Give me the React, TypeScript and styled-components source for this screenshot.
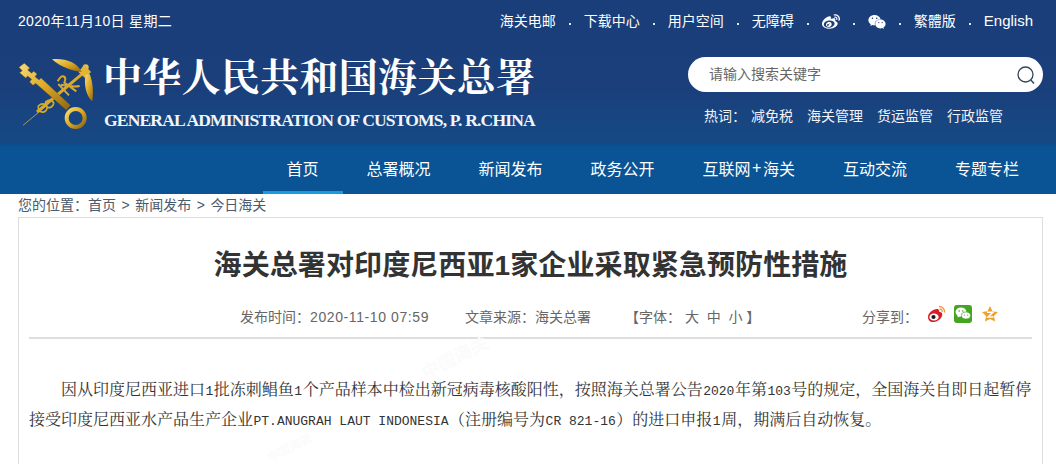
import React from "react";
import styled, { createGlobalStyle } from "styled-components";
import { FaWeibo, FaWeixin } from "react-icons/fa";

const sans = `"Liberation Sans", "Noto Sans CJK SC", sans-serif`;

const Global = createGlobalStyle`
  html, body { margin: 0; padding: 0; background: #fff; overflow: hidden; }
  body { font-family: ${sans}; }
  * { box-sizing: border-box; }
`;

const Page = styled.div`
  width: 1056px;
  height: 464px;
  overflow: hidden;
  background: #fff;
`;

const Header = styled.header`
  height: 144px;
  background: linear-gradient(180deg, #1a3e7a 0%, #1a3f7b 60%, #164a85 100%);
  color: #fff;
`;

const TopBar = styled.div`
  height: 40px;
  padding: 0 23px 0 18px;
  display: flex;
  align-items: center;
  justify-content: space-between;
  font-size: 14px;
`;

const DateText = styled.span`
  color: #fff;
  letter-spacing: 0.33px;
`;

const Links = styled.nav`
  display: flex;
  align-items: center;
`;

const TopLink = styled.a<{ $en?: boolean }>`
  color: #fff;
  display: inline-flex;
  align-items: center;
  font-size: ${(p) => (p.$en ? "15px" : "14px")};
`;

const TopIcon = styled(TopLink)`
  padding-top: 3px;
`;

const Dot = styled.i`
  width: 28px;
  display: flex;
  justify-content: center;
  &::before {
    content: "";
    width: 2px;
    height: 2px;
    margin-top: 8px;
    background: #dfe8f5;
  }
`;

const HeadRow = styled.div`
  height: 104px;
  padding: 0 13px 0 17px;
  display: flex;
  justify-content: space-between;
`;

const Brand = styled.div`
  display: flex;
  gap: 5px;
  padding-top: 12px;
`;

const Logo = styled.svg`
  width: 81px;
  height: 86px;
  flex: none;
`;

const BrandText = styled.div`
  display: flex;
  flex-direction: column;
`;

const TitleCn = styled.h1`
  margin: -3px 0 0;
  font-family: "Noto Serif CJK SC", "Noto Sans CJK SC", serif;
  font-size: 39px;
  line-height: 50px;
  letter-spacing: 0.3px;
  font-weight: 700;
  white-space: nowrap;
  color: #fff;
`;

const TitleEn = styled.div`
  font-family: "Liberation Serif", serif;
  font-size: 17.5px;
  line-height: 24px;
  margin: 9px 0 0 1px;
  font-weight: 700;
  letter-spacing: -0.82px;
  white-space: nowrap;
  color: #f2f5fa;
`;

const SearchCol = styled.div`
  width: 355px;
  padding-top: 17px;
  display: flex;
  flex-direction: column;
`;

const SearchBox = styled.div`
  height: 35px;
  background: #fff;
  border-radius: 18px;
  padding: 0 7px 0 21px;
  display: flex;
  align-items: center;
  justify-content: space-between;
  color: #666;
  font-size: 14px;
`;

const Placeholder = styled.span`
  margin-top: -3px;
`;

const SearchIcon = styled.svg`
  width: 20px;
  height: 20px;
`;

const HotRow = styled.div`
  margin-top: 14px;
  padding-left: 16px;
  display: flex;
  font-size: 14px;
  line-height: 20px;
  color: #f0f4fa;
`;

const HotLabel = styled.span`
  width: 47px;
`;

const HotWord = styled.a`
  margin-right: 14px;
`;

const MainNav = styled.nav`
  height: 50px;
  background: #0a5394;
  border-top: 2px solid #0f4c8c;
  display: flex;
  justify-content: flex-end;
  padding-right: 13px;
`;

const NavItem = styled.a<{ $active?: boolean }>`
  height: 48px;
  padding: 0 24px 2px;
  display: flex;
  align-items: center;
  color: #fff;
  font-size: 16px;
  border-bottom: 3px solid ${(p) => (p.$active ? "#1a9be0" : "transparent")};
`;

const NavPlus = styled.span`
  padding: 0 1.5px;
`;

const Crumbs = styled.div`
  height: 23px;
  padding: 0 0 2px 18px;
  display: flex;
  align-items: center;
  font-size: 14px;
  color: #4b5a6c;
  line-height: 20px;
`;

const CrumbSep = styled.span`
  margin: 0 5.5px;
`;

const Card = styled.main`
  position: relative;
  margin-left: 18px;
  width: 1025px;
  height: 260px;
  border: 1px solid #dcdcdc;
  border-bottom: 0;
  padding: 0 10px;
  overflow: hidden;
`;

const Title = styled.h2`
  margin: 0;
  padding-top: 28px;
  font-size: 28px;
  line-height: 40px;
  letter-spacing: 0.1px;
  font-weight: 700;
  color: #333;
  text-align: center;
`;

const Meta = styled.div`
  margin-top: 19px;
  height: 34px;
  padding-left: 211px;
  border-bottom: 2px solid #dedede;
  display: flex;
  align-items: flex-start;
  font-size: 14px;
  line-height: 24px;
  color: #666;
`;

const MetaItem = styled.span<{ $w: number }>`
  width: ${(p) => p.$w}px;
  flex: none;
  white-space: pre;
`;

const MetaDate = styled(MetaItem)`
  letter-spacing: 0.6px;
`;

const Share = styled.span`
  display: flex;
  align-items: center;
  height: 20px;
  margin-top: -1px;
`;

const ShareIcon = styled.svg<{ $gap?: number }>`
  width: 20px;
  height: 20px;
  margin-left: ${(p) => p.$gap ?? 8}px;
`;

const Article = styled.article`
  position: relative;
  z-index: 1;
  padding-top: 35px;
  width: 1003px;
  font-family: "Noto Serif CJK SC", "Noto Sans CJK SC", serif;
  font-size: 16px;
  line-height: 30px;
  font-weight: 400;
  color: #333;
`;

const Para = styled.p`
  margin: 0;
  text-indent: 32px;
`;

const Latin = styled.span`
  font-family: "Liberation Mono", monospace;
  font-size: 13px;
  line-height: 1;
  margin: 0 0.5px;
`;

const Watermark = styled.span<{ $left: number; $top: number; $size: number }>`
  position: absolute;
  left: ${(p) => p.$left}px;
  top: ${(p) => p.$top}px;
  transform: rotate(-27deg);
  font-size: ${(p) => p.$size}px;
  line-height: 1;
  font-weight: 700;
  color: #fbfbfb;
  white-space: nowrap;
  user-select: none;
`;

const Shield = () => (
  <Logo viewBox="20 30 243 258" aria-hidden="true">
    <defs>
      <linearGradient id="gold" x1="0" y1="0" x2="1" y2="1">
        <stop offset="0" stopColor="#f7dc7a" />
        <stop offset="0.5" stopColor="#dca823" />
        <stop offset="1" stopColor="#8f6510" />
      </linearGradient>
    </defs>
    <path d="M38 250 L110 190" stroke="#a59468" strokeWidth="3" fill="none" />
    <path d="M80 210 L220 92" stroke="#d9a92a" strokeWidth="9" fill="none" />
    <path
      d="M84 192 C98 178 116 190 108 204 C100 216 82 210 84 192 Z M106 180 C120 168 134 178 128 190 C120 202 104 198 106 180 Z"
      stroke="#d9a92a"
      strokeWidth="5"
      fill="none"
    />
    <path
      d="M142 118 C156 92 170 104 162 122 L198 148 M144 126 L176 160 M152 128 C170 132 190 136 208 132"
      stroke="#d9a92a"
      strokeWidth="6"
      fill="none"
    />
    <circle cx="226" cy="76" r="9" fill="#e8bf45" />
    <path d="M222 68 L242 90 L224 108 L204 90 Z" fill="#e3b534" />
    <path d="M125 52 C160 48 198 58 214 90 C190 88 150 76 125 52 Z" fill="url(#gold)" />
    <path d="M238 96 C248 122 250 150 246 178 C226 160 220 124 226 98 Z" fill="url(#gold)" />
    <path
      d="M42 64 L58 78 L52 84 L64 94 L70 88 L80 96 L74 104 L86 114 L92 108 L180 190 L168 204 L76 124 L68 130 L58 120 L64 112 L52 102 L46 108 L28 92 L36 86 L26 76 Z"
      fill="url(#gold)"
      stroke="#7d5a0e"
      strokeWidth="1"
    />
    <circle cx="196" cy="228" r="27" fill="none" stroke="url(#gold)" strokeWidth="12" />
  </Logo>
);

const Weibo = () => (
  <ShareIcon $gap={8} viewBox="0 0 20 20" aria-hidden="true">
    <path d="M2 13 C2 9 7 5 11 5 C13.500 5 13 7.500 13.500 8 C15.500 8 17 9.500 16 12 C14.500 16 10 18 7 18 C4 18 2 16 2 13 Z" fill="#d81e29" />
    <ellipse cx="8" cy="13" rx="4.600" ry="3.600" fill="#fff" />
    <circle cx="7.500" cy="13" r="2.100" fill="#1b1b1b" />
    <path d="M13 2.500 C16.500 2.500 19 5 18.500 8.500 M13.500 5 C15.200 5 16.500 6.300 16.200 8" stroke="#ef9a3c" strokeWidth="1.300" fill="none" />
  </ShareIcon>
);

const WeChat = () => (
  <ShareIcon $gap={7} viewBox="0 0 20 20" aria-hidden="true">
    <rect x="1" y="1" width="18" height="18" rx="3" fill="#45a420" />
    <ellipse cx="8" cy="8" rx="5.500" ry="4.500" fill="#fff" />
    <path d="M5 11 L4.500 13.500 L8 12 Z" fill="#fff" />
    <ellipse cx="13" cy="11.500" rx="4.500" ry="3.500" fill="#fff" stroke="#45a420" strokeWidth="0.700" />
    <circle cx="6.200" cy="7" r="0.800" fill="#45a420" />
    <circle cx="9.800" cy="7" r="0.800" fill="#45a420" />
    <circle cx="11.500" cy="11" r="0.600" fill="#45a420" />
    <circle cx="14.500" cy="11" r="0.600" fill="#45a420" />
  </ShareIcon>
);

const QZone = () => (
  <ShareIcon $gap={7} viewBox="0 0 20 20" aria-hidden="true">
    <path d="M10 2 L12.500 7.200 L18 8 L14 12 L15 17.500 L10 15 L5 17.500 L6 12 L2 8 L7.500 7.200 Z" fill="#eda02c" />
    <path d="M7 8.300 H13 L8 13 H13.500" stroke="#fff" strokeWidth="1.500" fill="none" />
  </ShareIcon>
);

export default function App() {
  return (
    <Page>
      <Global />
      <Header>
        <TopBar>
          <DateText>2020年11月10日 星期二</DateText>
          <Links>
            <TopLink>海关电邮</TopLink>
            <Dot />
            <TopLink>下载中心</TopLink>
            <Dot />
            <TopLink>用户空间</TopLink>
            <Dot />
            <TopLink>无障碍</TopLink>
            <Dot />
            <TopIcon><FaWeibo size={18} /></TopIcon>
            <Dot />
            <TopIcon><FaWeixin size={18} /></TopIcon>
            <Dot />
            <TopLink>繁體版</TopLink>
            <Dot />
            <TopLink $en>English</TopLink>
          </Links>
        </TopBar>
        <HeadRow>
          <Brand>
            <Shield />
            <BrandText>
              <TitleCn>中华人民共和国海关总署</TitleCn>
              <TitleEn>GENERAL ADMINISTRATION OF CUSTOMS, P. R.CHINA</TitleEn>
            </BrandText>
          </Brand>
          <SearchCol>
            <SearchBox>
              <Placeholder>请输入搜索关键字</Placeholder>
              <SearchIcon viewBox="0 0 20 20" aria-hidden="true">
                <circle cx="9.500" cy="9.500" r="7.500" fill="none" stroke="#33475b" strokeWidth="1.300" />
                <path d="M14.800 15 L18 18.500" stroke="#33475b" strokeWidth="1.500" fill="none" />
              </SearchIcon>
            </SearchBox>
            <HotRow>
              <HotLabel>热词：</HotLabel>
              <HotWord>减免税</HotWord>
              <HotWord>海关管理</HotWord>
              <HotWord>货运监管</HotWord>
              <HotWord>行政监管</HotWord>
            </HotRow>
          </SearchCol>
        </HeadRow>
      </Header>
      <MainNav>
        <NavItem $active>首页</NavItem>
        <NavItem>总署概况</NavItem>
        <NavItem>新闻发布</NavItem>
        <NavItem>政务公开</NavItem>
        <NavItem>互联网<NavPlus>+</NavPlus>海关</NavItem>
        <NavItem>互动交流</NavItem>
        <NavItem>专题专栏</NavItem>
      </MainNav>
      <Crumbs>
        <span>您的位置：</span>
        <span>首页</span>
        <CrumbSep>&gt;</CrumbSep>
        <span>新闻发布</span>
        <CrumbSep>&gt;</CrumbSep>
        <span>今日海关</span>
      </Crumbs>
      <Card>
        <Watermark $left={400} $top={131} $size={18}>中国海关</Watermark>
        <Watermark $left={247} $top={224} $size={12}>中国海关</Watermark>
        <Title>海关总署对印度尼西亚1家企业采取紧急预防性措施</Title>
        <Meta>
          <MetaItem $w={70}>发布时间：</MetaItem>
          <MetaDate $w={155}>2020-11-10 07:59</MetaDate>
          <MetaItem $w={160}>文章来源：海关总署</MetaItem>
          <MetaItem $w={237}>【字体： 大  中  小 】</MetaItem>
          <MetaItem $w={56}>分享到：</MetaItem>
          <Share>
            <Weibo />
            <WeChat />
            <QZone />
          </Share>
        </Meta>
        <Article>
          <Para>
            因从印度尼西亚进口<Latin>1</Latin>批冻刺鲳鱼<Latin>1</Latin>个产品样本中检出新冠病毒核酸阳性，按照海关总署公告<Latin>2020</Latin>年第<Latin>103</Latin>号的规定，全国海关自即日起暂停接受印度尼西亚水产品生产企业<Latin>PT.ANUGRAH LAUT INDONESIA</Latin>（注册编号为<Latin>CR 821-16</Latin>）的进口申报<Latin>1</Latin>周，期满后自动恢复。
          </Para>
        </Article>
      </Card>
    </Page>
  );
}
